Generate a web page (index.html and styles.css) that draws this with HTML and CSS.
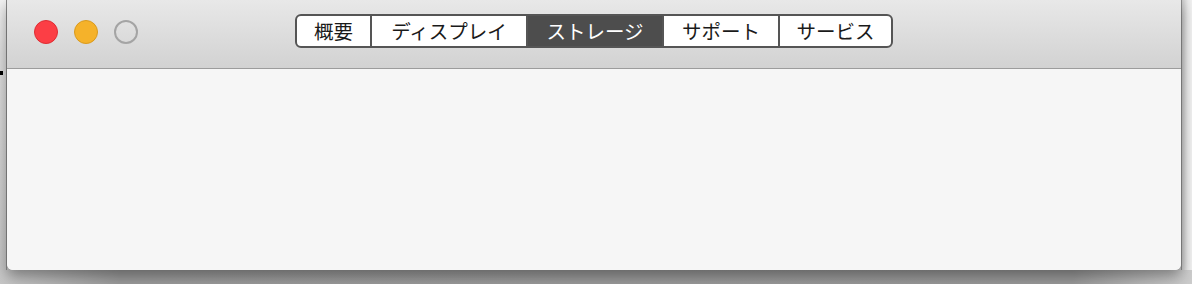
FILE: index.html
```html
<!DOCTYPE html>
<html lang="ja">
<head>
<meta charset="utf-8">
<link rel="stylesheet" href="styles.css">
</head>
<body>
<div class="desk">
  <div class="side-left"><span class="tick"></span></div>
  <div class="window">
    <div class="titlebar">
      <div class="lights">
        <span class="light red"></span>
        <span class="light yellow"></span>
        <span class="light gray"></span>
      </div>
      <div class="segments">
        <span class="seg w1">概要</span>
        <span class="seg w2">ディスプレイ</span>
        <span class="seg w3 active">ストレージ</span>
        <span class="seg w4">サポート</span>
        <span class="seg w5">サービス</span>
      </div>
    </div>
    <div class="content"></div>
  </div>
  <div class="side-right"></div>
</div>
</body>
</html>
```
FILE: styles.css
```css
html, body {
  margin: 0;
  padding: 0;
  width: 1192px;
  height: 284px;
  overflow: hidden;
  background: linear-gradient(90deg, #c6c6c6 0%, #9a9a9a 10%, #989898 90%, #cccccc 100%);
  font-family: "Noto Sans CJK JP", "Noto Sans", sans-serif;
}
.desk {
  display: flex;
  height: 284px;
  align-items: flex-start;
}
.side-left {
  width: 7px;
  height: 270px;
  background: linear-gradient(180deg, #f2f2f2 0%, #dcdcdc 20%, #d0d0d0 60%, #c4c4c4 100%);
  border-right: 1px solid #8a8a8a;
  box-sizing: border-box;
  position: relative;
}
.tick {
  position: absolute;
  left: 0;
  top: 71px;
  width: 3px;
  height: 4px;
  background: #000;
}
.side-right {
  width: 11px;
  height: 270px;
  background: linear-gradient(90deg, #c8c8c8 0%, #e8e8e8 60%, #f0f0f0 100%);
  border-left: 1px solid #8e8e8e;
  box-sizing: border-box;
}
.window {
  width: 1174px;
  height: 270px;
  display: flex;
  flex-direction: column;
  border-radius: 0 0 6px 6px;
  background: #f6f6f6;
  box-shadow: 0 6px 14px rgba(0, 0, 0, 0.35);
  overflow: hidden;
  position: relative;
  z-index: 1;
}
.titlebar {
  height: 68px;
  flex: none;
  background: linear-gradient(180deg, #e8e8e8 0%, #d2d2d2 100%);
  border-bottom: 1px solid #9c9c9c;
  display: flex;
  align-items: flex-start;
  position: relative;
}
.lights {
  display: flex;
  gap: 16px;
  padding: 20px 0 0 27px;
}
.light {
  width: 24px;
  height: 24px;
  border-radius: 50%;
  box-sizing: border-box;
}
.red { background: #fc3e45; border: 1px solid #de2d33; }
.yellow { background: #f5b22a; border: 1px solid #d99a1e; }
.gray { background: transparent; border: 2px solid #a4a4a4; }
.segments {
  position: absolute;
  left: 288px;
  top: 14px;
  display: flex;
  height: 34px;
  box-sizing: border-box;
  border: 2px solid #555;
  border-radius: 6px;
  overflow: hidden;
  background: #fff;
}
.seg {
  display: flex;
  align-items: center;
  justify-content: center;
  font-size: 19.5px;
  color: #1a1a1a;
  border-left: 2px solid #555;
  box-sizing: border-box;
  line-height: 1;
}
.seg.w1 { width: 73px; border-left: none; }
.seg.w2 { width: 156px; }
.seg.w3 { width: 136px; }
.seg.w4 { width: 116px; }
.seg.w5 { width: 113px; }
.seg.active {
  background: #4d4d4d;
  color: #fff;
}
.content {
  flex: 1;
  background: #f6f6f6;
}
```
